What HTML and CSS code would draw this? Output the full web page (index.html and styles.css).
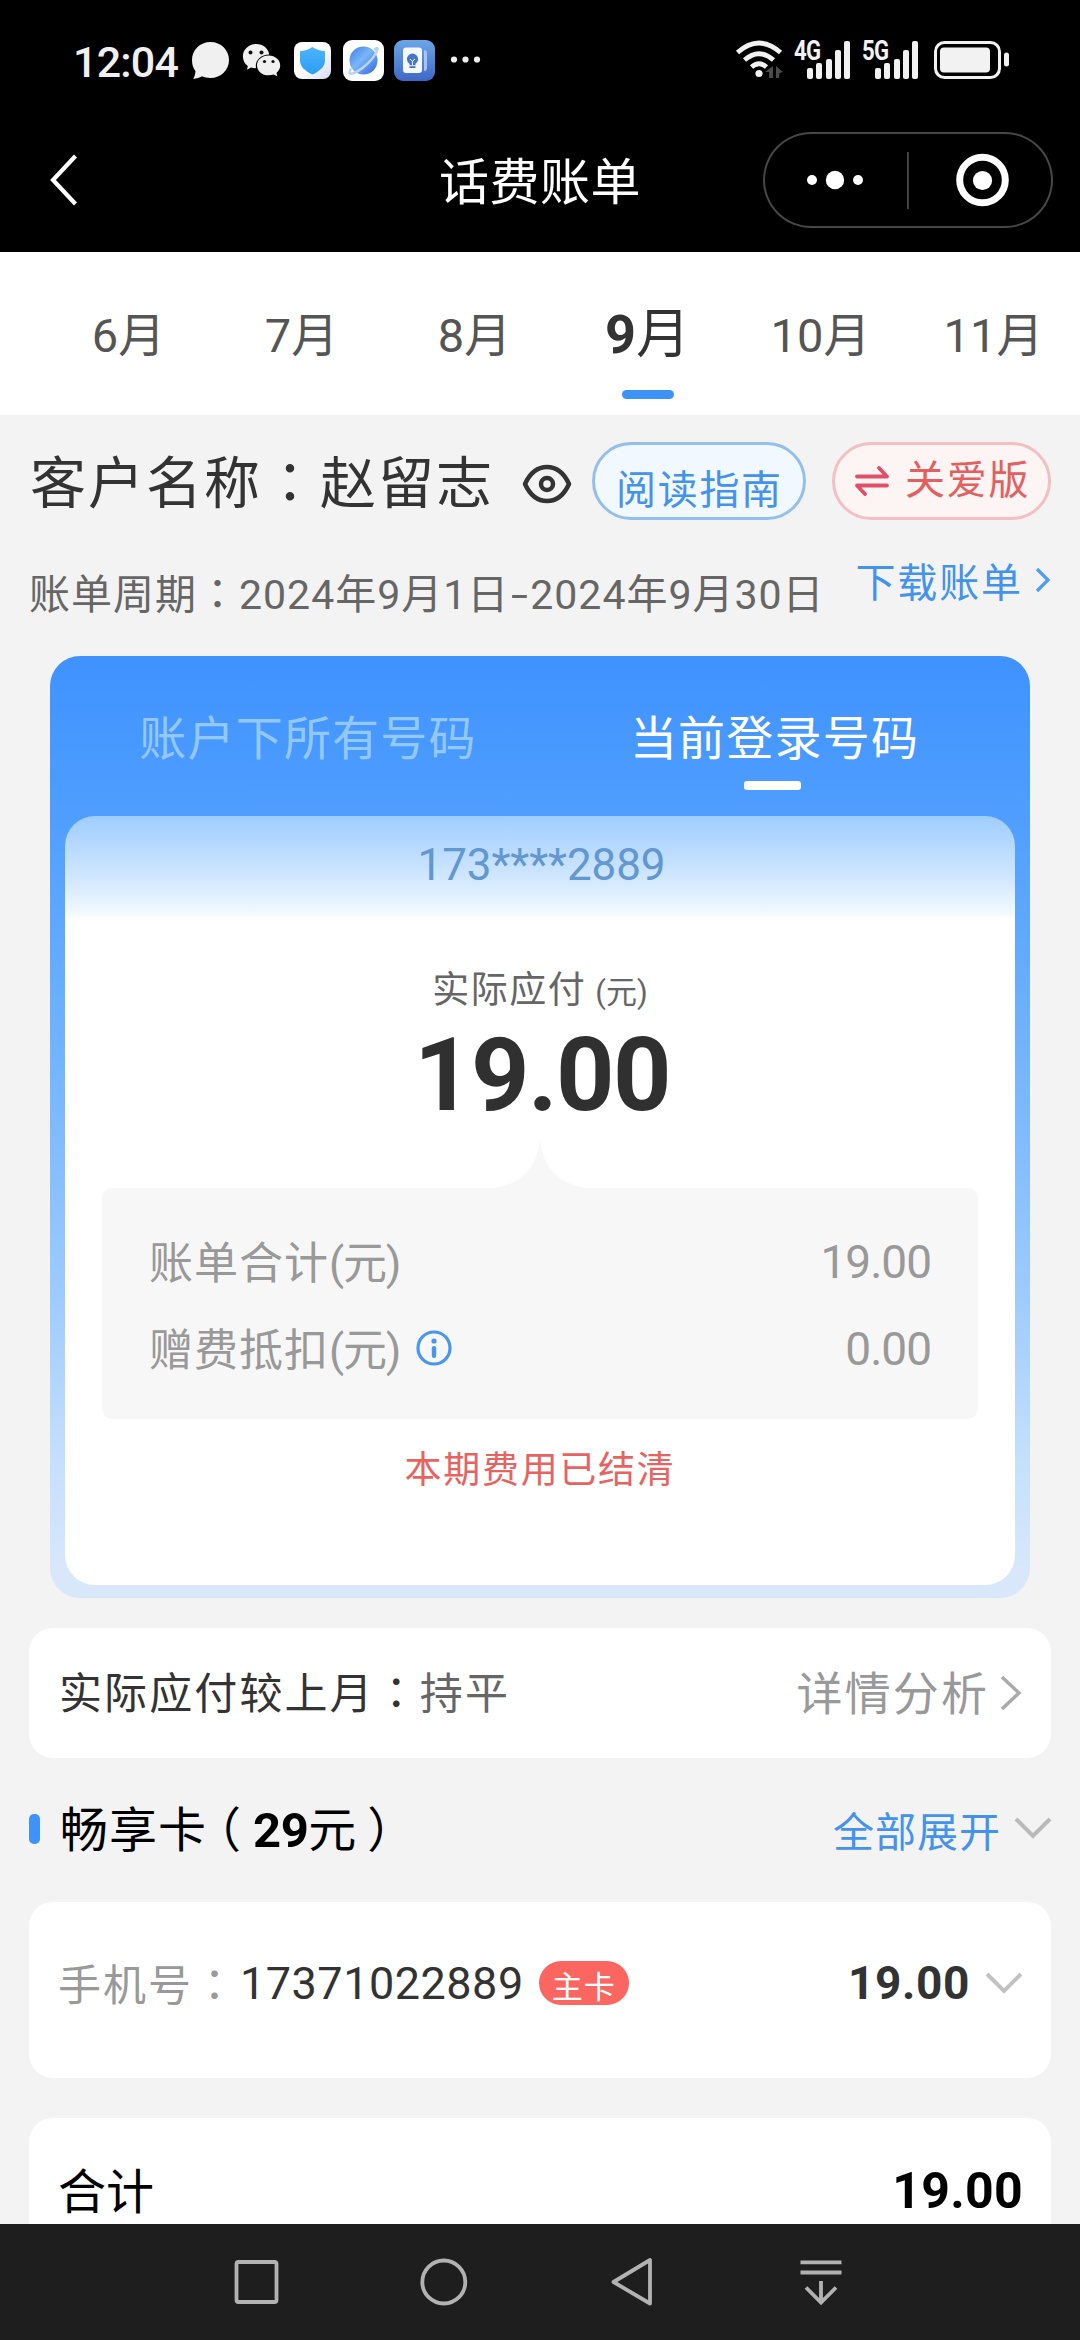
FILE: index.html
```html
<!DOCTYPE html>
<html lang="zh-CN">
<head>
<meta charset="utf-8">
<title>话费账单</title>
<link rel="stylesheet" href="styles.css">
</head>
<body>
<div class="phone">
  <header class="top">
    <div class="status">
      <span class="clock">12:04</span>
      <svg class="status-apps" width="300" height="50" viewBox="185 35 300 50">
        <defs>
          <linearGradient id="gs" x1="0" y1="0" x2="0" y2="1"><stop offset="0" stop-color="#4cb4fa"/><stop offset="1" stop-color="#2b9df6"/></linearGradient>
          <linearGradient id="gw" x1="0" y1="0" x2="1" y2="1"><stop offset=".5" stop-color="#fff"/><stop offset="1" stop-color="#d5dcf4"/></linearGradient>
          <linearGradient id="gp" x1="0" y1="0" x2="1" y2="1"><stop offset="0" stop-color="#3b7fe8"/><stop offset=".45" stop-color="#7bb6f8"/><stop offset="1" stop-color="#2c62dc"/></linearGradient>
          <linearGradient id="gb" x1="0" y1="0" x2="0" y2="1"><stop offset="0" stop-color="#6ba6e6"/><stop offset="1" stop-color="#3f68c6"/></linearGradient>
        </defs>
        <path fill="#f0f0f0" d="M210.500 42c10.500 0 18.500 8 18.500 18s-8 18-18.500 18c-3.500 0-6-.6-8.500-1.700-2.500 1.200-5.500 2.400-8.700 2.700 1.200-2.700 2-5 2.200-7.800-2.300-3-3.500-6.700-3.500-11.200 0-10 8-18 18.500-18z"/>
        <path fill="#f0f0f0" d="M256 44c7.200 0 12.600 4.800 13.200 10.600-8 .2-13.400 5.400-13.400 11.400l.2 2.200c-1.800 0-3.400-.2-5-.6l-4 2.200 .8-3.800c-3-2.200-4.900-5.700-4.900-9.600C242.900 49.600 248.500 44 256 44z"/>
        <path fill="#f0f0f0" d="M268.600 55.500c6.600 0 11.600 4.400 11.600 10 0 3-1.500 5.500-3.700 7.400l.8 3.300-3.700-1.700c-1.500.5-3.200.8-5 .8-6.600 0-11.600-4.400-11.600-9.900s5-9.900 11.600-9.900z"/>
        <g fill="#111"><circle cx="250.500" cy="52.500" r="2"/><circle cx="261.500" cy="52.500" r="2"/><circle cx="264.500" cy="61.500" r="1.600"/><circle cx="273" cy="61.500" r="1.600"/></g>
        <rect x="294" y="42" width="37" height="37" rx="8" fill="url(#gw)"/>
        <path fill="url(#gs)" d="M312.500 47c4 2.500 8 4 12.500 4.300v9.200c0 6-5 10.500-12.500 14-7.500-3.500-12.500-8-12.500-14v-9.200c4.500-.3 8.500-1.800 12.500-4.300z"/>
        <rect x="343" y="40" width="41" height="41" rx="9" fill="#fff"/>
        <circle cx="363.500" cy="60.500" r="14" fill="url(#gp)"/>
        <path fill="none" stroke="#b9d2f8" stroke-width="2.600" d="M374 50c4-3.500 4.500-2 2 3-3 6-11 14-19 18.500-7 4-9 2.500-6-3"/>
        <rect x="394" y="40" width="41" height="41" rx="9" fill="url(#gb)"/>
        <path fill="#a9c4ee" d="M424 50q3 0 3 3v15q0 3-3 3z"/>
        <rect x="403" y="47.500" width="19" height="25.500" rx="3" fill="#f4f8ff"/>
        <path fill="#4575cc" d="M412.500 53.500a5.600 5.600 0 0 1 5.600 5.600c0 2-1 3.600-2.600 4.600v1.500h-6v-1.500a5.500 5.500 0 0 1-2.600-4.600 5.600 5.600 0 0 1 5.600-5.600zM409.500 66.200h6v1.800h-6z"/>
        <path stroke="#f4f8ff" fill="none" d="M410 59l2.500 2.300 2.500-2.300M412.500 61v4"/>
        <g fill="#eee"><circle cx="454" cy="59.500" r="3.100"/><circle cx="465.500" cy="59.500" r="3.100"/><circle cx="477" cy="59.500" r="3.100"/></g>
      </svg>
      <svg class="wifi" width="48" height="40" viewBox="735 40 48 40" fill="none" stroke="#f2f2f2" stroke-width="4.800">
        <path d="M737.500 52.500Q759 33.500 780.500 52.500M744.500 60Q759 47.500 773.500 60M751.500 67Q759 60.500 766.500 67"/>
        <circle cx="759" cy="73.500" r="3.600" fill="#f2f2f2" stroke="none"/>
        <path fill="#4a4a4a" stroke="none" d="M773 66v12h-4v-6h-4zM776 66l7 6-3.500 1-.5 5h-3z"/>
      </svg>
      <span class="signal"><b>4G</b><i></i><i></i><i></i><i></i><i></i></span>
      <span class="signal"><b>5G</b><i></i><i></i><i></i><i></i><i></i></span>
      <svg class="battery" width="76" height="38" viewBox="0 0 76 38"><rect x="1.500" y="1.500" width="64" height="35" rx="9" fill="none" stroke="#f2f2f2" stroke-width="3"/><rect x="6" y="6.500" width="50" height="25" rx="4" fill="#f2f2f2"/><rect x="70" y="11.500" width="5" height="14" rx="2.500" fill="#f2f2f2"/></svg>
    </div>
    <div class="navbar">
      <svg class="back" width="30" height="52" viewBox="0 0 30 52" fill="none" stroke="#fff" stroke-width="4.200"><path d="M26.500 2 4 26 26.500 50"/></svg>
      <h1>话费账单</h1>
      <div class="capsule">
        <svg width="290" height="96" viewBox="0 0 290 96" fill="#fff"><circle cx="49" cy="48" r="5"/><circle cx="72" cy="48" r="9.200"/><circle cx="95" cy="48" r="5"/><path fill="#4a4a4a" d="M144 20h1.800v57H144z"/><circle cx="219.500" cy="48" r="22.800" fill="none" stroke="#fff" stroke-width="7"/><circle cx="219.500" cy="48.500" r="9.600"/></svg>
      </div>
    </div>
  </header>

  <nav class="months">
    <span>6月</span><span>7月</span><span>8月</span><span class="on"><b>9</b>月</span><span>10月</span><span>11月</span>
  </nav>

  <main>
    <section class="customer">
      <span class="name">客户名称<span class="colon" lang="zh-Hant">：</span>赵留志</span>
      <svg class="eye" width="50" height="40" viewBox="0 0 50 40" fill="none" stroke="#333" stroke-width="4.500"><path stroke-linejoin="round" d="M3 20C8 9 16 3 25 3s17 6 22 17C42 31 34 37 25 37S8 31 3 20z"/><circle cx="25" cy="20" r="6"/></svg>
      <span class="pill guide">阅读指南</span>
      <span class="pill care"><svg width="34" height="32" viewBox="0 0 34 32" fill="none" stroke="#e04f68" stroke-width="3.800"><path stroke-linecap="round" stroke-linejoin="round" d="M2 11.500h30L24 3M32 20.500H2l8 8.500"/></svg>关爱版</span>
    </section>
    <section class="period">
      <span class="dates">账单周期<span class="colon" lang="zh-Hant">：</span>2024年9月1日<span class="dash">-</span>2024年9月30日</span>
      <a class="download">下载账单<svg width="16" height="28" viewBox="0 0 16 28" fill="none" stroke="#4f9cf0" stroke-width="3.200"><path d="M2 3l11 11L2 25"/></svg></a>
    </section>

    <section class="bill">
      <div class="bill-tabs"><span>账户下所有号码</span><span class="on">当前登录号码</span></div>
      <div class="bill-body">
        <div class="number">173****2889</div>
        <div class="due">实际应付<small>(元)</small></div>
        <div class="amount">19.00</div>
        <svg class="notch" width="110" height="49" viewBox="0 0 110 49"><path fill="#f7f7f7" d="M0 49C34 47 52 29 55 0c3 29 21 47 55 49z"/></svg>
        <div class="detail">
          <div class="line"><span>账单合计<span class="unit">(元)</span></span><em>19.00</em></div>
          <div class="line"><span>赠费抵扣<span class="unit">(元)</span></span><svg width="38" height="38" viewBox="0 0 38 38"><circle cx="19" cy="19" r="16" fill="none" stroke="#4796ef" stroke-width="3.200"/><circle cx="19" cy="12" r="2.600" fill="#4796ef"/><rect x="16.800" y="17" width="4.400" height="12" rx="2.200" fill="#4796ef"/></svg><em>0.00</em></div>
        </div>
        <div class="settled">本期费用已结清</div>
      </div>
    </section>

    <section class="card compare">
      <span>实际应付较上月<span class="colon" lang="zh-Hant">：</span><span class="flat">持平</span></span>
      <a class="analysis">详情分析<svg width="24" height="38" viewBox="0 0 24 38" fill="none" stroke="#aaa" stroke-width="3.500"><path d="M3 3l17 16L3 35"/></svg></a>
    </section>

    <section class="plan">
      <i class="mark"></i>
      <span class="plan-name">畅享卡<span class="paren">（</span><b>29</b>元<span class="paren">）</span></span>
      <a class="expand">全部展开<svg width="38" height="24" viewBox="0 0 38 24" fill="none" stroke="#b9b9bb" stroke-width="4"><path d="M2 3l17 17L36 3"/></svg></a>
    </section>

    <section class="card phone-row">
      <span class="label">手机号<span class="colon" lang="zh-Hant">：</span></span><span class="tel">17371022889</span><span class="badge">主卡</span>
      <b class="sum">19.00</b>
      <svg width="38" height="24" viewBox="0 0 38 24" fill="none" stroke="#c2c2c4" stroke-width="4"><path d="M2 3l17 17L36 3"/></svg>
    </section>

    <section class="card total"><span>合计</span><b>19.00</b></section>
  </main>

  <footer class="keys">
    <svg width="1080" height="116" viewBox="0 2224 1080 116" fill="none" stroke="#b2b2b2" stroke-width="3.800">
      <rect x="236.500" y="2262" width="40" height="40" rx="2"/>
      <circle cx="443.800" cy="2282" r="21.500"/>
      <path stroke-linejoin="round" d="M650 2260v43.500L613.500 2282z"/>
      <path d="M800.500 2262.300h41M800.500 2272.500h41M821 2281v21M806 2287.500l15 15 15-15"/>
    </svg>
  </footer>
</div>
</body>
</html>
```
FILE: styles.css
```css
* { box-sizing: border-box; }
body { margin: 0; background: #f3f3f3; font-family: Roboto, "Noto Sans CJK SC", sans-serif; color: #333; }
svg { display: block; flex: none; }
em, i { font-style: normal; }
.colon { font-family: "Noto Sans CJK TC", sans-serif; line-height: 1; }
.phone { width: 1080px; height: 2340px; display: flex; flex-direction: column; overflow: hidden; }

.top { height: 252px; flex: none; background: #000; color: #fff; }
.status { height: 120px; padding-left: 73px; display: flex; align-items: center; }
.clock { width: 112px; font-size: 43px; font-weight: 500; line-height: 50px; color: #f0f0f0; letter-spacing: -.8px; margin-top: 3px; }
.wifi { margin-left: 250px; }
.signal { width: 57px; height: 38px; margin-left: 11px; padding-left: 13px; display: flex; align-items: flex-end; gap: 3.300px; position: relative; }
.signal + .signal { margin-left: 11px; }
.signal b { position: absolute; left: 0; top: -3px; font: 700 27px/26px Roboto, sans-serif; letter-spacing: -1px; transform: scaleX(.82); transform-origin: 0 0; color: #f2f2f2; }
.signal i { width: 6px; height: 11px; border-radius: 2px; background: #f2f2f2; }
.signal i:nth-of-type(2) { height: 16px; }
.signal i:nth-of-type(3) { height: 20px; }
.signal i:nth-of-type(4) { height: 29px; }
.signal i:nth-of-type(5) { height: 38px; }
.battery { margin-left: 15px; }
.navbar { height: 120px; display: grid; grid-template-columns: 340px 400px 340px; align-items: center; }
.back { margin-left: 49px; }
h1 { margin: 0; text-align: center; font-size: 50px; font-weight: 400; line-height: 60px; letter-spacing: .5px; padding-top: 5px; }
.capsule { width: 290px; height: 96px; margin-left: 23px; border-radius: 48px; box-shadow: inset 0 0 0 2px #474747; }

.months { height: 163px; flex: none; background: #fff; display: grid; grid-template-columns: repeat(6, 173px); padding-left: 42px; text-align: center; font-size: 47px; line-height: 168px; color: #555; }
.months .on { color: #333; font-size: 54px; line-height: 166px; display: grid; justify-content: center; grid-auto-flow: column; position: relative; }
.months .on::after { content: ""; position: absolute; left: 61px; top: 138px; width: 52px; height: 9px; border-radius: 5px; background: #3e92f5; }

main { flex: 1; min-height: 0; overflow: hidden; }
.customer { height: 132px; padding: 27px 29px 0 30px; display: flex; }
.name { width: 492px; font-size: 56px; letter-spacing: 2px; line-height: 84px; color: #333; white-space: nowrap; }
.eye { margin-top: 22px; }
.pill { height: 78px; border-radius: 39px; font-size: 40px; letter-spacing: 1.700px; white-space: nowrap; }
.guide { width: 214px; margin-left: 20px; border: 3px solid #94beec; background: #f2f8ff; color: #4392ec; padding-left: 21px; line-height: 91px; }
.care { width: 219px; margin-left: 26px; border: 3px solid #f3bfc0; background: #fdf4f4; color: #e26060; padding-left: 20px; line-height: 76px; display: flex; align-items: center; gap: 16px; }
.period { height: 109px; padding: 0 29px; display: flex; justify-content: space-between; }
.dates { font-size: 41px; letter-spacing: 1px; line-height: 97px; color: #666; white-space: nowrap; }
.dash { display: inline-block; width: 21px; line-height: 1; text-align: center; letter-spacing: 0; transform: scaleX(1.500); }
.download { height: 66px; display: flex; align-items: center; font-size: 40px; letter-spacing: 1.900px; color: #4392ec; white-space: nowrap; }
.download svg { margin-left: 12px; }

.bill { height: 942px; margin: 0 50px; padding: 0 15px 13px; border-radius: 30px; background: linear-gradient(#3f92ff, #4f9eff 17%, #64abff 32%, #84bdff 53%, #a0ccff 69%, #c4dffc 85%, #d8e8fa 97%); display: flex; flex-direction: column; }
.bill-tabs { height: 160px; flex: none; display: grid; grid-template-columns: 1fr 1fr; text-align: center; font-size: 47px; letter-spacing: 1.200px; line-height: 165px; color: #93c8fc; }
.bill-tabs span:first-child { padding-left: 11px; }
.bill-tabs .on { color: #fff; position: relative; padding-right: 6px; }
.bill-tabs .on::after { content: ""; position: absolute; left: 204px; top: 125px; width: 57px; height: 9px; border-radius: 3px; background: #fff; }
.bill-body { flex: 1; border-radius: 30px; background: linear-gradient(#9fcdff, #cfe6ff 60px, #f4faff 99px, #fff 102px); display: flex; flex-direction: column; align-items: center; }
.number { height: 98px; line-height: 98px; font-size: 44px; letter-spacing: -.1px; padding-left: 3px; color: #6297cf; }
.due { height: 106px; padding-top: 52px; line-height: 50px; font-size: 37px; letter-spacing: 1.500px; color: #666; }
.due small { font-size: 31px; letter-spacing: 0; margin-left: 9px; }
.amount { height: 120px; line-height: 110px; font-size: 102px; font-weight: 700; letter-spacing: -1.500px; color: #303030; margin-left: 4px; }
.notch { margin-bottom: -1px; }
.detail { width: 876px; height: 231px; border-radius: 10px; background: #f7f7f7; padding: 32px 47px 0 47px; color: #999; font-size: 44px; }
.line { height: 87px; display: flex; align-items: center; letter-spacing: 1px; line-height: 86px; }
.unit { letter-spacing: -1px; }
.line svg { margin: -6px 0 0 15px; }
.line em { margin: -3px 0 0 auto; font-size: 46px; letter-spacing: -1px; }
.settled { line-height: 104px; font-size: 37px; letter-spacing: 1.700px; color: #e8635f; }

.card { margin: 0 29px; background: #fff; border-radius: 24px; display: flex; align-items: center; white-space: nowrap; }
.compare { height: 130px; margin-top: 30px; padding: 3px 28px 0 30px; justify-content: space-between; font-size: 43px; letter-spacing: 2.100px; line-height: 127px; }
.flat { color: #666; }
.analysis { display: flex; align-items: center; font-size: 46px; color: #999; }
.analysis svg { margin: -3px 0 0 10px; }
.plan { height: 144px; padding: 0 28px 2px 29px; display: flex; align-items: center; white-space: nowrap; }
.mark { width: 11px; height: 30px; border-radius: 5px; background: #3e92f9; }
.plan-name { margin-left: 20px; padding-top: 4px; font-size: 48px; letter-spacing: 1px; line-height: 70px; color: #000; }
.plan-name b { font-size: 49px; letter-spacing: -.5px; }
.paren { font-feature-settings: "halt"; margin: 0 11px 0 10px; }
.expand { margin-left: auto; display: flex; align-items: center; font-size: 41px; letter-spacing: 1px; color: #4392ec; }
.expand svg { margin: -2px 0 0 13px; }
.phone-row { height: 176px; padding: 0 28px 14px 29px; font-size: 43px; letter-spacing: 2px; }
.label { color: #999; margin-top: -2px; }
.tel { font-size: 45px; letter-spacing: .5px; margin-left: 2px; }
.badge { width: 90px; height: 44px; margin-left: 15px; border-radius: 22px; background: #fc6660; color: #fff; font-size: 31px; letter-spacing: 1px; line-height: 53px; text-align: center; }
.sum { margin-left: auto; margin-right: 15px; font-size: 46px; letter-spacing: .6px; }
.total { height: 150px; margin-top: 40px; padding: 0 28px 4px 29px; justify-content: space-between; font-size: 48px; color: #000; }
.total span { margin-top: -6px; }
.total b { font-size: 50px; letter-spacing: .3px; }

.keys { height: 116px; flex: none; background: #1e1e1e; }
```
